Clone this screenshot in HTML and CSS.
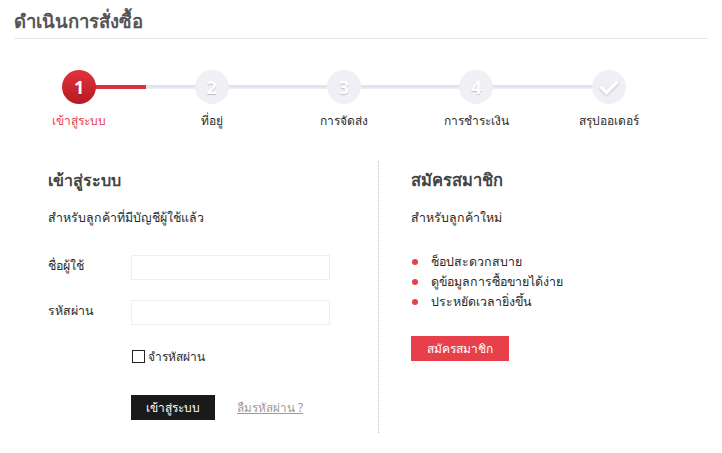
FILE: index.html
```html
<!DOCTYPE html>
<html lang="th">
<head>
<meta charset="utf-8">
<title>ดำเนินการสั่งซื้อ</title>
<link rel="stylesheet" href="styles.css">
</head>
<body>
<div class="page">
  <h1 class="page-title">ดำเนินการสั่งซื้อ</h1>
  <ol class="steps">
    <li class="step step-active"><span class="dot">1</span><span class="step-label">เข้าสู่ระบบ</span></li>
    <li class="step"><span class="dot">2</span><span class="step-label">ที่อยู่</span></li>
    <li class="step"><span class="dot">3</span><span class="step-label">การจัดส่ง</span></li>
    <li class="step"><span class="dot">4</span><span class="step-label">การชำระเงิน</span></li>
    <li class="step"><span class="dot"><svg class="check" width="22" height="18" viewBox="0 0 22 18"><path d="M2.5 8.5 L8.5 14.5 L19.5 3.5" fill="none" stroke="#ffffff" stroke-width="3.4"/></svg></span><span class="step-label">สรุปออเดอร์</span></li>
  </ol>
  <div class="columns">
    <section class="col col-login">
      <h2 class="col-title">เข้าสู่ระบบ</h2>
      <p class="col-sub">สำหรับลูกค้าที่มีบัญชีผู้ใช้แล้ว</p>
      <div class="field"><label class="field-label">ชื่อผู้ใช้</label><span class="input"></span></div>
      <div class="field"><label class="field-label">รหัสผ่าน</label><span class="input"></span></div>
      <div class="remember"><span class="box"></span><span>จำรหัสผ่าน</span></div>
      <div class="actions"><span class="btn btn-dark">เข้าสู่ระบบ</span><a class="forgot" href="#">ลืมรหัสผ่าน ?</a></div>
    </section>
    <section class="col col-register">
      <h2 class="col-title">สมัครสมาชิก</h2>
      <p class="col-sub">สำหรับลูกค้าใหม่</p>
      <ul class="benefits">
        <li>ช็อปสะดวกสบาย</li>
        <li>ดูข้อมูลการซื้อขายได้ง่าย</li>
        <li>ประหยัดเวลายิ่งขึ้น</li>
      </ul>
      <span class="btn btn-red">สมัครสมาชิก</span>
    </section>
  </div>
</div>
</body>
</html>
```
FILE: styles.css
```css
* { box-sizing: border-box; }
html, body { margin: 0; padding: 0; background: #fff; }
body {
  font-family: Tahoma, "Noto Sans", "DejaVu Sans", sans-serif;
  font-size: 12px;
  color: #2b2b2b;
}
.page { width: 722px; height: 453px; overflow: hidden; padding: 0 14px; }
.page-title {
  margin: 0;
  height: 39px;
  padding-top: 9px;
  font-size: 18.5px;
  line-height: 24px;
  font-weight: 700;
  color: #555;
  border-bottom: 1px solid #e8e8e8;
}
.steps {
  position: relative;
  list-style: none;
  margin: 31px 0 0 -1px;
  padding: 0;
  width: 662px;
  display: grid;
  grid-template-columns: repeat(5, 1fr);
}
.steps::before {
  content: "";
  position: absolute;
  left: 66px;
  width: 529px;
  top: 15px;
  height: 4px;
  background: linear-gradient(#e2e3ec 0, #e2e3ec 50%, #f0f1f6 100%);
}
.steps::after {
  content: "";
  position: absolute;
  left: 66px;
  width: 67px;
  top: 15px;
  height: 4px;
  background: #d8323c;
}
.step { position: relative; z-index: 1; display: flex; flex-direction: column; align-items: center; }
.dot {
  width: 34px;
  height: 34px;
  border-radius: 50%;
  background: #eef0f6;
  color: #fff;
  font: 700 18px/34px "Open Sans", sans-serif;
  text-align: center;
  text-shadow: 0 1px 1px rgba(0,0,0,.2);
  display: flex;
  align-items: center;
  justify-content: center;
}
.check { filter: drop-shadow(0 1px 1px rgba(0,0,0,.2)); }
.step-active .dot { background: linear-gradient(#e2323c, #b51a22); }
.step-label { margin-top: 8px; line-height: 18px; white-space: nowrap; }
.step-active .step-label { color: #e8404a; }
.columns { display: grid; grid-template-columns: 365px 1fr; margin-top: 31px; height: 272px; }
.col { padding-top: 8px; font-size: 12.4px; }
.col-login { padding-left: 34px; border-right: 1px dotted #c4c4c4; }
.col-register { padding-left: 32px; }
.col-title { margin: 0; font-size: 16px; line-height: 22px; font-weight: 700; color: #444; }
.col-register .col-title { font-size: 16.5px; }
.col-sub { margin: 17px 0 0; line-height: 20px; }
.field { display: flex; align-items: center; height: 25px; }
.field-label { width: 83px; margin-top: -4px; }
.col-sub + .field { margin-top: 27px; }
.field + .field { margin-top: 20px; }
.input { width: 199px; height: 25px; border: 1px solid #eee; background: #fff; }
.remember { display: flex; align-items: center; gap: 3px; margin: 22px 0 0 84px; height: 18px; font-size: 12px; }
.box { width: 13px; height: 13px; border: 1px solid #222; }
.actions { display: flex; align-items: center; margin: 30px 0 0 83px; gap: 22px; font-size: 11.7px; }
.btn { display: inline-block; height: 25px; line-height: 25px; text-align: center; font-size: 12px; }
.btn-dark { width: 84px; background: #1a1a1a; color: #fff; }
.btn-red { width: 98px; background: #e8404a; color: #fff; }
.forgot { color: #999; text-decoration: underline; }
.benefits { list-style: none; margin: 24px 0 0; padding: 0; }
.benefits li { position: relative; padding-left: 20px; line-height: 20px; }
.benefits li::before {
  content: "";
  position: absolute;
  left: 1px;
  top: 7px;
  width: 6px;
  height: 6px;
  border-radius: 50%;
  background: #e8404a;
}
.col-register .btn { margin-top: 24px; }
```
